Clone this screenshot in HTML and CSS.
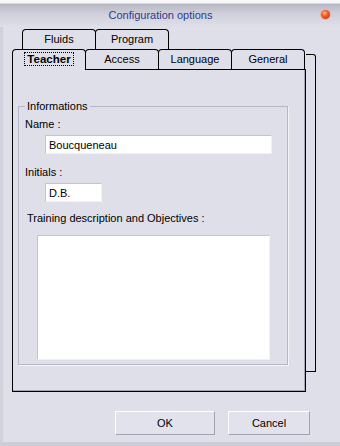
FILE: index.html
```html
<!DOCTYPE html>
<html lang="en">
<head>
    <meta charset="UTF-8">
    <title>Configuration options</title>
    <link rel="stylesheet" href="styles.css">
</head>
<body>
    <div class="window">
        <div class="titlebar">
            <span class="title">Configuration options</span>
            <span class="close"></span>
        </div>

        <div class="content">
            <div class="tabs-area">
                <div class="tab-stack">
                    <div class="tab-row back-row">
                        <div class="tab">Fluids</div>
                        <div class="tab">Program</div>
                    </div>
                    <div class="tab-row">
                        <div class="tab active"><span class="focus">Teacher</span></div>
                        <div class="tab">Access</div>
                        <div class="tab">Language</div>
                        <div class="tab">General</div>
                    </div>

                    <div class="panel">
                        <fieldset class="group">
                            <legend>Informations</legend>
                            <label class="lbl first">Name :</label>
                            <input class="field name" type="text" value="Boucqueneau">
                            <label class="lbl">Initials :</label>
                            <input class="field initials" type="text" value="D.B.">
                            <label class="lbl training">Training description and Objectives :</label>
                            <textarea class="field notes"></textarea>
                        </fieldset>
                    </div>
                </div>
                <!-- edge of the pages behind -->
                <div class="page-edge"></div>
            </div>

            <div class="buttons">
                <button class="btn ok">OK</button>
                <button class="btn cancel">Cancel</button>
            </div>
        </div>
    </div>
</body>
</html>
```

FILE: styles.css
```css
body {
    margin: 0;
    padding: 0;
    background: #dfdfe9;
    font-family: "Liberation Sans", Arial, sans-serif;
    font-size: 11px;
    color: #000;
}

.window {
    width: 340px;
    height: 446px;
    box-sizing: border-box;
    background: #dfdfe9;
    border-bottom: 4px solid #cdcdd9;
    display: flex;
    flex-direction: column;
}

.titlebar {
    height: 27px;
    display: flex;
    align-items: center;
    background: linear-gradient(180deg, #f7f7fa 0, #f7f7fa 3px, #b7b7c4 4px, #d0d0dc 14px, #dfdfe9 27px);
}

.title {
    flex: 1;
    text-align: center;
    color: #2b3b8f;
    font-size: 11px;
    padding-top: 2px;
}

.close {
    width: 9px;
    height: 9px;
    margin-right: 10px;
    margin-top: 1px;
    border-radius: 50%;
    background: radial-gradient(circle at 40% 35%, #ffc0a0 0, #f4602c 35%, #d8401a 70%, #b8361c 100%);
    box-shadow: 0 0 0 1px #e8b4a8;
}

.content {
    flex: 1;
    border-left: 3px solid #d2d2dc;
    padding-left: 9px;
}

.tabs-area {
    display: flex;
    margin-top: 2px;
}

.tab-stack {
    width: 294px;
    display: flex;
    flex-direction: column;
}

.tab-row {
    display: flex;
    height: 20px;
}

.back-row {
    margin-left: 10px;
}

.tab {
    width: 74px;
    height: 20px;
    box-sizing: border-box;
    border: 1px solid #000;
    border-bottom: none;
    border-radius: 4px 4px 0 0;
    background: #dfdfe9;
    text-align: center;
    line-height: 19px;
}

.tab + .tab {
    margin-left: -1px;
}

.back-row .tab {
    width: 74px;
}

.tab.active {
    position: relative;
    z-index: 1;
    height: 21px;
    font-weight: bold;
    font-size: 11.5px;
}

.focus {
    outline: 1px dotted #000;
    padding: 0 2px;
}

.panel {
    height: 323px;
    box-sizing: border-box;
    border: 1px solid #000;
    box-shadow: inset -1px -1px 0 #a6a6b6;
    padding: 30px 0 0 5px;
}

.page-edge {
    width: 10px;
    height: 318px;
    box-sizing: border-box;
    margin-top: 25px;
    border: 1px solid #000;
    border-left: none;
    border-radius: 0 3px 0 0;
}

.group {
    width: 270px;
    box-sizing: border-box;
    margin: 0;
    padding: 0 6px 4px 6px;
    border: 1px solid #b6b6c6;
    box-shadow: 1px 1px 0 #f4f4f8;
}

.group legend {
    padding: 0 2px;
    line-height: 13px;
}

.lbl {
    display: block;
    line-height: 13px;
    margin-top: 12px;
}

.lbl.first {
    margin-top: 5px;
}

.lbl.training {
    margin-top: 10px;
    padding-left: 2px;
}

.field {
    display: block;
    box-sizing: border-box;
    margin: 4px 0 0 20px;
    padding: 0 3px;
    height: 19px;
    background: #fff;
    border: 1px solid;
    border-color: #c4c4d0 #f2f2f6 #f2f2f6 #c4c4d0;
    font-family: "Liberation Sans", Arial, sans-serif;
    font-size: 11px;
    color: #000;
    outline: none;
}

.name {
    width: 227px;
}

.initials {
    width: 57px;
}

.notes {
    width: 233px;
    height: 125px;
    margin: 10px 0 0 12px;
    resize: none;
}

.buttons {
    display: flex;
    justify-content: flex-end;
    gap: 13px;
    margin-top: 19px;
    padding-right: 30px;
}

.btn {
    height: 24px;
    box-sizing: border-box;
    border: 1px solid;
    border-color: #ffffff #a2a2b2 #a2a2b2 #ffffff;
    background: #e2e2ec;
    font-family: "Liberation Sans", Arial, sans-serif;
    font-size: 11px;
    color: #000;
    padding: 0;
}

.ok {
    width: 100px;
}

.cancel {
    width: 82px;
}
```
